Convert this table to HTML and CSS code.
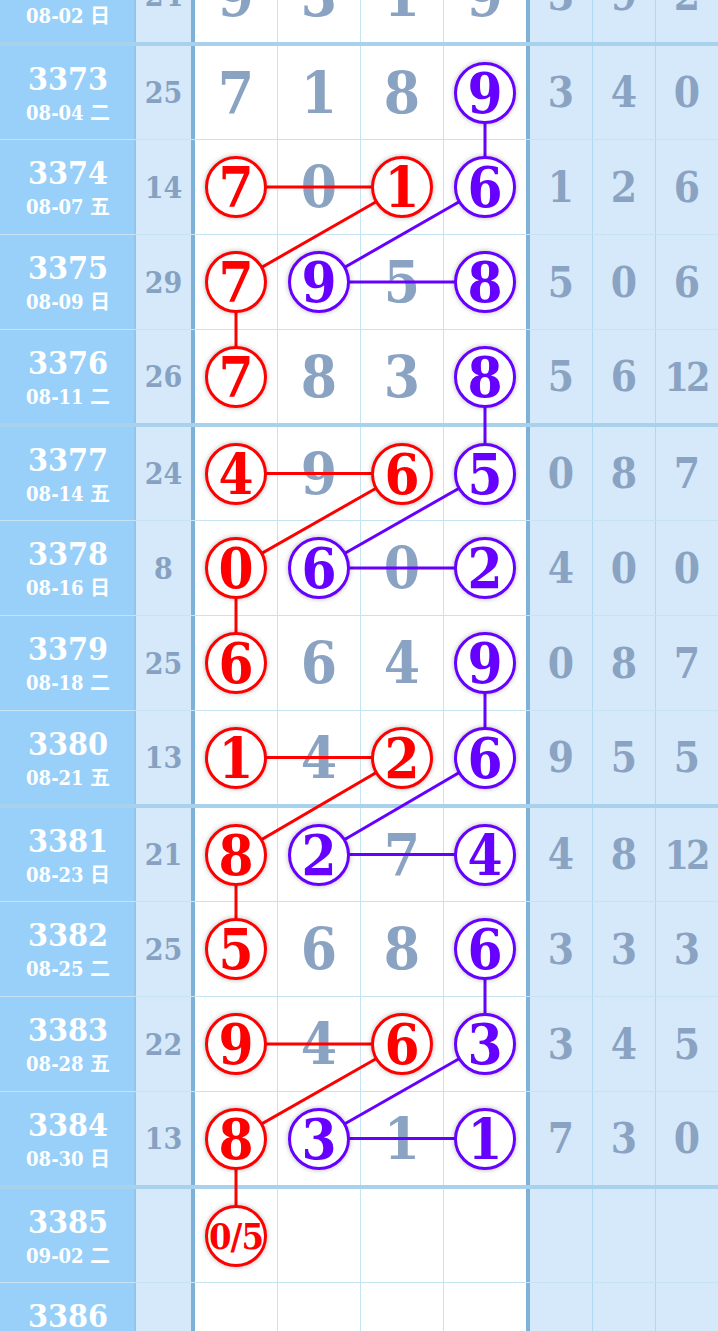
FILE: index.html
```html
<!DOCTYPE html>
<html lang="zh">
<head>
<meta charset="utf-8">
<title>走势图</title>
<link rel="stylesheet" href="styles.css">
</head>
<body>
<div class="board">
  <div class="row g-end">
    <div class="c-issue"><span class="no">3372</span><span class="date">08-02 日</span></div>
    <div class="c-sum">24</div>
    <div class="c-n">9</div><div class="c-n">3</div><div class="c-n">1</div><div class="c-n last">9</div>
    <div class="c-r">3</div><div class="c-r">9</div><div class="c-r">2</div>
  </div>
  <div class="row g-first">
    <div class="c-issue"><span class="no">3373</span><span class="date">08-04 二</span></div>
    <div class="c-sum">25</div>
    <div class="c-n">7</div><div class="c-n">1</div><div class="c-n">8</div><div class="c-n last"><span class="ball purple">9</span></div>
    <div class="c-r">3</div><div class="c-r">4</div><div class="c-r">0</div>
  </div>
  <div class="row">
    <div class="c-issue"><span class="no">3374</span><span class="date">08-07 五</span></div>
    <div class="c-sum">14</div>
    <div class="c-n"><span class="ball red">7</span></div><div class="c-n">0</div><div class="c-n"><span class="ball red">1</span></div><div class="c-n last"><span class="ball purple">6</span></div>
    <div class="c-r">1</div><div class="c-r">2</div><div class="c-r">6</div>
  </div>
  <div class="row">
    <div class="c-issue"><span class="no">3375</span><span class="date">08-09 日</span></div>
    <div class="c-sum">29</div>
    <div class="c-n"><span class="ball red">7</span></div><div class="c-n"><span class="ball purple">9</span></div><div class="c-n">5</div><div class="c-n last"><span class="ball purple">8</span></div>
    <div class="c-r">5</div><div class="c-r">0</div><div class="c-r">6</div>
  </div>
  <div class="row g-end">
    <div class="c-issue"><span class="no">3376</span><span class="date">08-11 二</span></div>
    <div class="c-sum">26</div>
    <div class="c-n"><span class="ball red">7</span></div><div class="c-n">8</div><div class="c-n">3</div><div class="c-n last"><span class="ball purple">8</span></div>
    <div class="c-r">5</div><div class="c-r">6</div><div class="c-r two">12</div>
  </div>
  <div class="row g-first">
    <div class="c-issue"><span class="no">3377</span><span class="date">08-14 五</span></div>
    <div class="c-sum">24</div>
    <div class="c-n"><span class="ball red">4</span></div><div class="c-n">9</div><div class="c-n"><span class="ball red">6</span></div><div class="c-n last"><span class="ball purple">5</span></div>
    <div class="c-r">0</div><div class="c-r">8</div><div class="c-r">7</div>
  </div>
  <div class="row">
    <div class="c-issue"><span class="no">3378</span><span class="date">08-16 日</span></div>
    <div class="c-sum">8</div>
    <div class="c-n"><span class="ball red">0</span></div><div class="c-n"><span class="ball purple">6</span></div><div class="c-n">0</div><div class="c-n last"><span class="ball purple">2</span></div>
    <div class="c-r">4</div><div class="c-r">0</div><div class="c-r">0</div>
  </div>
  <div class="row">
    <div class="c-issue"><span class="no">3379</span><span class="date">08-18 二</span></div>
    <div class="c-sum">25</div>
    <div class="c-n"><span class="ball red">6</span></div><div class="c-n">6</div><div class="c-n">4</div><div class="c-n last"><span class="ball purple">9</span></div>
    <div class="c-r">0</div><div class="c-r">8</div><div class="c-r">7</div>
  </div>
  <div class="row g-end">
    <div class="c-issue"><span class="no">3380</span><span class="date">08-21 五</span></div>
    <div class="c-sum">13</div>
    <div class="c-n"><span class="ball red">1</span></div><div class="c-n">4</div><div class="c-n"><span class="ball red">2</span></div><div class="c-n last"><span class="ball purple">6</span></div>
    <div class="c-r">9</div><div class="c-r">5</div><div class="c-r">5</div>
  </div>
  <div class="row g-first">
    <div class="c-issue"><span class="no">3381</span><span class="date">08-23 日</span></div>
    <div class="c-sum">21</div>
    <div class="c-n"><span class="ball red">8</span></div><div class="c-n"><span class="ball purple">2</span></div><div class="c-n">7</div><div class="c-n last"><span class="ball purple">4</span></div>
    <div class="c-r">4</div><div class="c-r">8</div><div class="c-r two">12</div>
  </div>
  <div class="row">
    <div class="c-issue"><span class="no">3382</span><span class="date">08-25 二</span></div>
    <div class="c-sum">25</div>
    <div class="c-n"><span class="ball red">5</span></div><div class="c-n">6</div><div class="c-n">8</div><div class="c-n last"><span class="ball purple">6</span></div>
    <div class="c-r">3</div><div class="c-r">3</div><div class="c-r">3</div>
  </div>
  <div class="row">
    <div class="c-issue"><span class="no">3383</span><span class="date">08-28 五</span></div>
    <div class="c-sum">22</div>
    <div class="c-n"><span class="ball red">9</span></div><div class="c-n">4</div><div class="c-n"><span class="ball red">6</span></div><div class="c-n last"><span class="ball purple">3</span></div>
    <div class="c-r">3</div><div class="c-r">4</div><div class="c-r">5</div>
  </div>
  <div class="row g-end">
    <div class="c-issue"><span class="no">3384</span><span class="date">08-30 日</span></div>
    <div class="c-sum">13</div>
    <div class="c-n"><span class="ball red">8</span></div><div class="c-n"><span class="ball purple">3</span></div><div class="c-n">1</div><div class="c-n last"><span class="ball purple">1</span></div>
    <div class="c-r">7</div><div class="c-r">3</div><div class="c-r">0</div>
  </div>
  <div class="row g-first">
    <div class="c-issue"><span class="no">3385</span><span class="date">09-02 二</span></div>
    <div class="c-sum"></div>
    <div class="c-n"><span class="ball red small">0/5</span></div><div class="c-n"></div><div class="c-n"></div><div class="c-n last"></div>
    <div class="c-r"></div><div class="c-r"></div><div class="c-r"></div>
  </div>
  <div class="row">
    <div class="c-issue"><span class="no">3386</span><span class="date">09-04 四</span></div>
    <div class="c-sum"></div>
    <div class="c-n"></div><div class="c-n"></div><div class="c-n"></div><div class="c-n last"></div>
    <div class="c-r"></div><div class="c-r"></div><div class="c-r"></div>
  </div>

  <svg class="links" width="718" height="1331" viewBox="0 0 718 1331" aria-hidden="true">
    <g class="red-links">
      <line x1="236" y1="187" x2="402" y2="187"/>
      <line x1="402" y1="187" x2="236" y2="282"/>
      <line x1="236" y1="282" x2="236" y2="376.5"/>
      <line x1="236" y1="473.5" x2="402" y2="473.5"/>
      <line x1="402" y1="473.5" x2="236" y2="568"/>
      <line x1="236" y1="568" x2="236" y2="663"/>
      <line x1="236" y1="757.5" x2="402" y2="757.5"/>
      <line x1="402" y1="757.5" x2="236" y2="854.5"/>
      <line x1="236" y1="854.5" x2="236" y2="949"/>
      <line x1="236" y1="1044" x2="402" y2="1044"/>
      <line x1="402" y1="1044" x2="236" y2="1138.5"/>
      <line x1="236" y1="1138.5" x2="236" y2="1235.5"/>
    </g>
    <g class="purple-links">
      <line x1="485" y1="92.5" x2="485" y2="187"/>
      <line x1="485" y1="187" x2="319" y2="282"/>
      <line x1="319" y1="282" x2="485" y2="282"/>
      <line x1="485" y1="376.5" x2="485" y2="473.5"/>
      <line x1="485" y1="473.5" x2="319" y2="568"/>
      <line x1="319" y1="568" x2="485" y2="568"/>
      <line x1="485" y1="663" x2="485" y2="757.5"/>
      <line x1="485" y1="757.5" x2="319" y2="854.5"/>
      <line x1="319" y1="854.5" x2="485" y2="854.5"/>
      <line x1="485" y1="949" x2="485" y2="1044"/>
      <line x1="485" y1="1044" x2="319" y2="1138.5"/>
      <line x1="319" y1="1138.5" x2="485" y2="1138.5"/>
    </g>
  </svg>
</div>
</body>
</html>
```

FILE: styles.css
```css
html, body {
  margin: 0;
  padding: 0;
  background: #ffffff;
}

body {
  width: 718px;
  height: 1331px;
  overflow: hidden;
  font-family: "DejaVu Serif Condensed", "DejaVu Serif", "Noto Sans CJK SC", serif;
  font-stretch: condensed;
}

.board {
  position: relative;
  width: 718px;
  margin-top: -51px;
}

.row {
  display: grid;
  grid-template-columns: 136px 59px 83px 83px 83px 86px 63px 63px 62px;
  height: 95px;
  box-sizing: border-box;
  border-bottom: 1px solid rgba(110, 185, 225, 0.4);
}

.row.g-first {
  height: 94px;
}

.row.g-end {
  height: 97px;
  border-bottom: 4px solid rgba(115, 182, 224, 0.62);
}

.row > div {
  display: flex;
  align-items: center;
  justify-content: center;
  box-sizing: border-box;
  font-weight: bold;
}

.c-issue {
  flex-direction: column;
  background: #98d0fa;
  color: #ffffff;
  box-shadow: inset -2px 0 0 #8cc6f1;
}

.c-issue .no {
  font-size: 32px;
  line-height: 32px;
}

.c-issue .date {
  font-size: 20px;
  line-height: 20px;
  margin-top: 8px;
}

.c-sum {
  background: #d5e9fa;
  color: #86a1c1;
  font-size: 30px;
  border-right: 4px solid #7db1d7;
}

.c-n {
  background: #ffffff;
  color: #8aa3c2;
  font-size: 58px;
  border-right: 1px solid rgba(110, 185, 225, 0.4);
}

.c-n.last {
  border-right: 4px solid #7db1d7;
}

.c-r {
  background: #d5e9fa;
  color: #8aa3c2;
  font-size: 42px;
  border-right: 1px solid rgba(110, 185, 225, 0.35);
}

.c-r.two {
  font-size: 39px;
  letter-spacing: -3px;
  padding-right: 2px;
}

.c-r:last-child {
  border-right: none;
}

.ball {
  position: relative;
  z-index: 2;
  width: 62px;
  height: 62px;
  box-sizing: border-box;
  border: 3px solid currentColor;
  border-radius: 50%;
  background: #ffffff;
  box-shadow: 0 0 5px rgba(0, 0, 0, 0.3);
  display: flex;
  align-items: center;
  justify-content: center;
  font-size: 56px;
  line-height: 1;
  font-weight: bold;
}

.ball.red {
  color: #ff0000;
}

.ball.purple {
  color: #6600ff;
}

.ball.small {
  font-size: 36px;
  letter-spacing: -1px;
}

.links {
  position: absolute;
  left: 0;
  top: 51px;
  z-index: 1;
  pointer-events: none;
}

.red-links line {
  stroke: #ff0000;
  stroke-width: 3;
}

.purple-links line {
  stroke: #6600ff;
  stroke-width: 3;
}
```
